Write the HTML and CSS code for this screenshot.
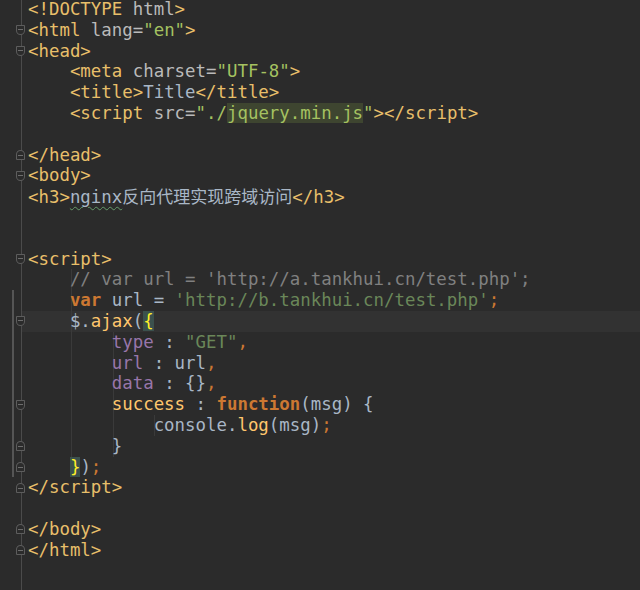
FILE: index.html
```html
<!DOCTYPE html>
<html lang="en">
<head>
    <meta charset="UTF-8">
    <title>Editor</title>
    <link rel="stylesheet" href="styles.css">
</head>
<body>
<div class="editor">
    <div class="line"><span class="gut"></span><code><span class="t">&lt;!DOCTYPE</span> <span class="a">html</span><span class="t">&gt;</span></code></div>
    <div class="line"><span class="gut"><i class="fold open"></i></span><code><span class="t">&lt;html</span> <span class="a">lang=</span><span class="v">"en"</span><span class="t">&gt;</span></code></div>
    <div class="line"><span class="gut"><i class="fold open"></i></span><code><span class="t">&lt;head&gt;</span></code></div>
    <div class="line"><span class="gut"></span><code>    <span class="t">&lt;meta</span> <span class="a">charset=</span><span class="v">"UTF-8"</span><span class="t">&gt;</span></code></div>
    <div class="line"><span class="gut"></span><code>    <span class="t">&lt;title&gt;</span>Title<span class="t">&lt;/title&gt;</span></code></div>
    <div class="line"><span class="gut"></span><code>    <span class="t">&lt;script</span> <span class="a">src=</span><span class="v">"./<span class="ref">jquery.min.js</span>"</span><span class="t">&gt;&lt;/script&gt;</span></code></div>
    <div class="line"><span class="gut"></span><code></code></div>
    <div class="line"><span class="gut"><i class="fold close"></i></span><code><span class="t">&lt;/head&gt;</span></code></div>
    <div class="line"><span class="gut"><i class="fold open"></i></span><code><span class="t">&lt;body&gt;</span></code></div>
    <div class="line"><span class="gut"></span><code><span class="t">&lt;h3&gt;</span><span class="typo">nginx</span><span class="cjk">反向代理实现跨域访问</span><span class="t">&lt;/h3&gt;</span></code></div>
    <div class="line"><span class="gut"></span><code></code></div>
    <div class="line"><span class="gut"></span><code></code></div>
    <div class="line"><span class="gut"><i class="fold open"></i></span><code><span class="t">&lt;script&gt;</span></code></div>
    <div class="line"><span class="gut"></span><code class="g1">    <span class="c">// var url = 'http://a.tankhui.cn/test.php';</span></code></div>
    <div class="line"><span class="gut mod"></span><code class="g1">    <span class="k b">var</span> url = <span class="s">'http://b.tankhui.cn/test.php'</span><span class="k">;</span></code></div>
    <div class="line current"><span class="gut mod"><i class="fold open"></i></span><code class="g1">    $.<span class="f">ajax</span>(<span class="brace">{</span></code></div>
    <div class="line"><span class="gut mod"></span><code class="g2">        <span class="p">type</span> : <span class="s">"GET"</span><span class="k">,</span></code></div>
    <div class="line"><span class="gut mod"></span><code class="g2">        <span class="p">url</span> : url<span class="k">,</span></code></div>
    <div class="line"><span class="gut mod"></span><code class="g2">        <span class="p">data</span> : {}<span class="k">,</span></code></div>
    <div class="line"><span class="gut mod"><i class="fold open"></i></span><code class="g2">        <span class="f">success</span> : <span class="k b">function</span>(msg) {</code></div>
    <div class="line"><span class="gut mod"></span><code class="g3">            console.<span class="f">log</span>(msg)<span class="k">;</span></code></div>
    <div class="line"><span class="gut mod"><i class="fold close"></i></span><code class="g2">        }</code></div>
    <div class="line"><span class="gut mod"><i class="fold close"></i></span><code class="g1">    <span class="brace">}</span>)<span class="k">;</span></code></div>
    <div class="line"><span class="gut"><i class="fold close"></i></span><code><span class="t">&lt;/script&gt;</span></code></div>
    <div class="line"><span class="gut"></span><code></code></div>
    <div class="line"><span class="gut"><i class="fold close"></i></span><code><span class="t">&lt;/body&gt;</span></code></div>
    <div class="line"><span class="gut"><i class="fold close"></i></span><code><span class="t">&lt;/html&gt;</span></code></div>
    <div class="line"><span class="gut"></span><code></code></div>
    <div class="line"><span class="gut"></span><code></code></div>
</div>
</body>
</html>
```

FILE: styles.css
```css
body {
    margin: 0;
    background-color: #2b2b2b;
    height: 590px;
    overflow: hidden;
}

.editor {
    margin-top: -1px;
    min-height: 600px;
    background: linear-gradient(#4b4b4b, #4b4b4b) no-repeat 21px 0 / 1px 100%;
    font-family: "DejaVu Sans Mono", "Noto Sans CJK SC", monospace;
    font-size: 17.4px;
    line-height: 20.8px;
    color: #a9b7c6;
}

.line {
    display: flex;
    height: 20.8px;
}

.line.current {
    background: linear-gradient(#323232, #323232) no-repeat 22px 0 / 100% 100%;
}

.gut {
    flex: 0 0 28px;
    display: flex;
    align-items: center;
    padding-left: 16px;
    box-sizing: border-box;
}

.gut.mod {
    background: linear-gradient(#555555, #555555) no-repeat 12px 0 / 2px 100%;
}

code {
    font-family: inherit;
    white-space: pre;
    flex: 1;
}

.g1 {
    background: linear-gradient(#3a3a3a, #3a3a3a) no-repeat 43px 0 / 1px 100%;
}

.g2 {
    background:
        linear-gradient(#3a3a3a, #3a3a3a) no-repeat 43px 0 / 1px 100%,
        linear-gradient(#3a3a3a, #3a3a3a) no-repeat 85px 0 / 1px 100%;
}

.g3 {
    background:
        linear-gradient(#3a3a3a, #3a3a3a) no-repeat 43px 0 / 1px 100%,
        linear-gradient(#3a3a3a, #3a3a3a) no-repeat 85px 0 / 1px 100%,
        linear-gradient(#3a3a3a, #3a3a3a) no-repeat 126px 0 / 1px 100%;
}

/* fold markers */
.fold {
    display: block;
    width: 9px;
    height: 10px;
    background: #2b2b2b;
    border: 1px solid #5d5d5d;
    box-sizing: border-box;
    position: relative;
}

.fold.open {
    border-radius: 1px 1px 5px 5px / 1px 1px 5px 5px;
}

.fold.close {
    border-radius: 5px 5px 1px 1px / 5px 5px 1px 1px;
}

.fold::after {
    content: '';
    position: absolute;
    left: 1px;
    right: 1px;
    top: 3px;
    height: 1px;
    background: #6d6d6d;
}

.fold.close::after {
    top: 4px;
}

.t { color: #e8bf6a; }
.a { color: #bababa; }
.v { color: #a5c261; }
.k { color: #cc7832; }
.b { font-weight: bold; }
.s { color: #6a8759; }
.c { color: #808080; }
.p { color: #9876aa; }
.f { color: #ffc66d; }

.ref {
    background: #3e4530;
    color: #a5c261;
}

.brace {
    background: #3b514d;
    color: #ffef28;
}

.typo {
    text-decoration: underline wavy #659c6b;
    text-decoration-thickness: 1px;
    text-underline-offset: 3px;
}

.cjk {
    font-family: "Noto Sans CJK SC", sans-serif;
    font-size: 17px;
}
```
